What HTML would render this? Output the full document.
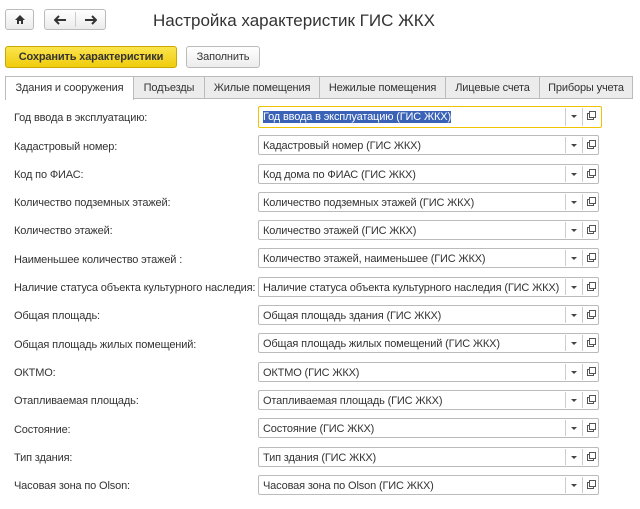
<!DOCTYPE html>
<html><head><meta charset="utf-8"><style>
body{margin:0;width:640px;height:509px;background:#fff;font-family:"Liberation Sans",sans-serif;font-size:11px;letter-spacing:-0.15px;color:#333;position:relative;overflow:hidden}
.a{position:absolute}
.btn{position:absolute;border:1px solid #bbb;border-radius:3px;background:linear-gradient(#fff,#ececec);box-sizing:border-box}
.tab{position:absolute;top:76px;height:22px;border:1px solid #bbb;border-bottom:none;background:#ececec;box-sizing:border-box;text-align:center;line-height:22px;color:#333}
.lbl{position:absolute;left:14px}
.f{position:absolute;left:258px;width:341px;height:20px;border:1px solid #bbb;border-radius:2px;box-sizing:border-box;background:#fff}
.f span{position:absolute;left:4px;top:4px;white-space:nowrap}
.f .s1{position:absolute;left:306px;top:1px;bottom:1px;border-left:1px solid #ccc}
.f .s2{position:absolute;left:323px;top:1px;bottom:1px;border-left:1px solid #ccc}
.f .dd{position:absolute;left:312px;top:8px;border-left:3px solid transparent;border-right:3px solid transparent;border-top:3px solid #444}
.f .op{position:absolute;left:328px;top:6px;width:5px;height:5px;border:1px solid #555;background:#fff}
.f .op2{position:absolute;left:330px;top:4px;width:5px;height:5px;border:1px solid #555;background:#fff}
</style></head><body>
<div class="btn" style="left:5px;top:9px;width:29px;height:21px"><svg class="a" style="left:8px;top:4px" width="12" height="11"><path d="M6 1L1 6H3V10H5V7H7V10H9V6H11Z" fill="#333"/></svg></div>
<div class="btn" style="left:44px;top:9px;width:62px;height:21px"><div class="a" style="left:30px;top:2px;bottom:2px;border-left:1px solid #ccc"></div>
<svg class="a" style="left:9px;top:5px" width="13" height="10"><path d="M1 5H12M5 1L1 5L5 9" stroke="#333" stroke-width="2" fill="none"/></svg>
<svg class="a" style="left:39px;top:5px" width="13" height="10"><path d="M1 5H12M8 1L12 5L8 9" stroke="#333" stroke-width="2" fill="none"/></svg></div>
<div class="a" style="left:153px;top:11px;font-size:17px;letter-spacing:0;color:#333">Настройка характеристик ГИС ЖКХ</div>
<div class="btn" style="left:5px;top:46px;width:172px;height:22px;background:linear-gradient(#fbe44e,#f0cc0c);border-color:#c9a800;text-align:center;line-height:20px;font-weight:bold;color:#333">Сохранить характеристики</div>
<div class="btn" style="left:186px;top:46px;width:74px;height:22px;text-align:center;line-height:20px">Заполнить</div>
<div class="a" style="left:5px;top:98px;width:628px;border-top:1px solid #bbb"></div>
<div class="tab" style="left:5px;width:129px;background:#fff;height:24px">Здания и сооружения</div>
<div class="tab" style="left:133px;width:72px">Подъезды</div>
<div class="tab" style="left:204px;width:116px">Жилые помещения</div>
<div class="tab" style="left:319px;width:127px">Нежилые помещения</div>
<div class="tab" style="left:445px;width:95px">Лицевые счета</div>
<div class="tab" style="left:539px;width:94px">Приборы учета</div>

<div class="lbl" style="top:112px">Год ввода в эксплуатацию:</div>
<div class="f" style="top:106px;height:22px;width:344px;border:1px solid #f0c400"><span style="background:#3a63b8;color:#fff;top:4px">Год ввода в эксплуатацию (ГИС ЖКХ)</span><i class="s1" style="left:306px"></i><i class="s2"></i><i class="dd"></i><i class="op"></i><i class="op2"></i></div>
<div class="lbl" style="top:141px">Кадастровый номер:</div>
<div class="f" style="top:135px"><span>Кадастровый номер (ГИС ЖКХ)</span><i class="s1"></i><i class="s2"></i><i class="dd"></i><i class="op"></i><i class="op2"></i></div>
<div class="lbl" style="top:169px">Код по ФИАС:</div>
<div class="f" style="top:164px"><span>Код дома по ФИАС (ГИС ЖКХ)</span><i class="s1"></i><i class="s2"></i><i class="dd"></i><i class="op"></i><i class="op2"></i></div>
<div class="lbl" style="top:197px">Количество подземных этажей:</div>
<div class="f" style="top:192px"><span>Количество подземных этажей (ГИС ЖКХ)</span><i class="s1"></i><i class="s2"></i><i class="dd"></i><i class="op"></i><i class="op2"></i></div>
<div class="lbl" style="top:225px">Количество этажей:</div>
<div class="f" style="top:220px"><span>Количество этажей (ГИС ЖКХ)</span><i class="s1"></i><i class="s2"></i><i class="dd"></i><i class="op"></i><i class="op2"></i></div>
<div class="lbl" style="top:254px">Наименьшее количество этажей :</div>
<div class="f" style="top:248px"><span>Количество этажей, наименьшее (ГИС ЖКХ)</span><i class="s1"></i><i class="s2"></i><i class="dd"></i><i class="op"></i><i class="op2"></i></div>
<div class="lbl" style="top:282px">Наличие статуса объекта культурного наследия:</div>
<div class="f" style="top:277px"><span>Наличие статуса объекта культурного наследия (ГИС ЖКХ)</span><i class="s1"></i><i class="s2"></i><i class="dd"></i><i class="op"></i><i class="op2"></i></div>
<div class="lbl" style="top:310px">Общая площадь:</div>
<div class="f" style="top:305px"><span>Общая площадь здания (ГИС ЖКХ)</span><i class="s1"></i><i class="s2"></i><i class="dd"></i><i class="op"></i><i class="op2"></i></div>
<div class="lbl" style="top:339px">Общая площадь жилых помещений:</div>
<div class="f" style="top:333px"><span>Общая площадь жилых помещений (ГИС ЖКХ)</span><i class="s1"></i><i class="s2"></i><i class="dd"></i><i class="op"></i><i class="op2"></i></div>
<div class="lbl" style="top:367px">ОКТМО:</div>
<div class="f" style="top:362px"><span>ОКТМО (ГИС ЖКХ)</span><i class="s1"></i><i class="s2"></i><i class="dd"></i><i class="op"></i><i class="op2"></i></div>
<div class="lbl" style="top:395px">Отапливаемая площадь:</div>
<div class="f" style="top:390px"><span>Отапливаемая площадь (ГИС ЖКХ)</span><i class="s1"></i><i class="s2"></i><i class="dd"></i><i class="op"></i><i class="op2"></i></div>
<div class="lbl" style="top:424px">Состояние:</div>
<div class="f" style="top:418px"><span>Состояние (ГИС ЖКХ)</span><i class="s1"></i><i class="s2"></i><i class="dd"></i><i class="op"></i><i class="op2"></i></div>
<div class="lbl" style="top:452px">Тип здания:</div>
<div class="f" style="top:447px"><span>Тип здания (ГИС ЖКХ)</span><i class="s1"></i><i class="s2"></i><i class="dd"></i><i class="op"></i><i class="op2"></i></div>
<div class="lbl" style="top:480px">Часовая зона по Olson:</div>
<div class="f" style="top:475px"><span>Часовая зона по Olson (ГИС ЖКХ)</span><i class="s1"></i><i class="s2"></i><i class="dd"></i><i class="op"></i><i class="op2"></i></div>
</body></html>
